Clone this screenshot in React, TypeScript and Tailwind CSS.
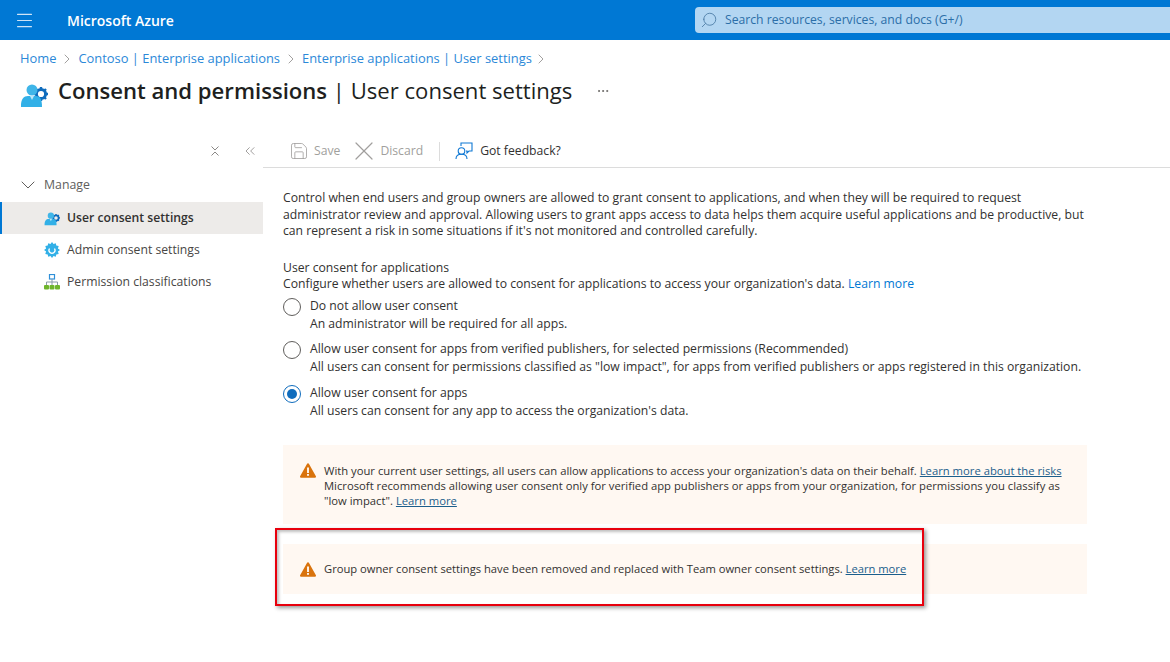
import React from 'react';
import { Menu, Search, ChevronRight, ChevronDown, ChevronsLeft, X, Save, Ellipsis } from 'lucide-react';

const font = "font-['Open_Sans','Noto_Sans',sans-serif]";

const PersonGear = ({ className }: { className?: string }) => (
  <svg viewBox="0 0 28 24" className={className}>
    <circle cx="21" cy="11" r="4.6" fill="none" stroke="#0f6cbd" strokeWidth="3" />
    <path d="M21 4v2.5M21 15.5V18M14 11h2.5M25.500 11H28M16 6l1.800 1.800M24.200 14.200L26 16M16 16l1.800-1.800M24.200 7.800L26 6" stroke="#0f6cbd" strokeWidth="2.400" />
    <circle cx="12" cy="7" r="5.500" fill="#3fb5e8" />
    <path d="M1 24c-.5-8 3-11 7-11h8c4 0 6 3 6 11z" fill="#32b0e7" />
    <path d="M10 13h4l-2 4z" fill="#bfe6f7" />
  </svg>
);

const AdminGear = () => (
  <svg viewBox="0 0 16 16" className="w-4 h-4">
    <path d="M8 0l1.500 2 2.300-.8.500 2.400 2.400.5-.8 2.300L16 8l-2.100 1.600.8 2.300-2.400.5-.5 2.400-2.300-.8L8 16l-1.500-2-2.300.8-.5-2.400-2.400-.5.8-2.300L0 8l2.100-1.600-.8-2.300 2.400-.5.5-2.400 2.300.8z" fill="#32b0e7" />
    <path d="M5.500 6.500a3 3 0 1 0 5 0" fill="none" stroke="#fff" strokeWidth="1.300" />
  </svg>
);

const Hierarchy = () => (
  <svg viewBox="0 0 16 16" className="w-4 h-4">
    <rect x="5.500" y="0.500" width="5" height="4.500" fill="#fff" stroke="#2f8fd8" strokeWidth="1.200" />
    <path d="M8 5v3M2.500 11V8h11v3M8 8v3" fill="none" stroke="#8a9aa8" strokeWidth="1" />
    <rect x="0" y="11" width="5" height="4.500" rx="1" fill="#6fb52c" />
    <rect x="5.500" y="11" width="5" height="4.500" rx="1" fill="#6fb52c" />
    <rect x="11" y="11" width="5" height="4.500" rx="1" fill="#6fb52c" />
  </svg>
);

const Feedback = () => (
  <svg viewBox="0 0 18 18" className="w-[18px] h-[18px]" fill="none" stroke="#0f78d4" strokeWidth="1.100">
    <path d="M6 4V1h11v8h-3l-2 2v-2h-1" />
    <circle cx="6.500" cy="9" r="3.300" />
    <path d="M1 17c0-3 2.300-4.700 5.500-4.700S12 14 12 17" />
  </svg>
);

const CollapseAll = () => (
  <svg viewBox="0 0 12 12" className="w-3 h-3" fill="none" stroke="#8a8886" strokeWidth="1">
    <path d="M2.500 1.500L6 5l3.500-3.500M2.500 10.500L6 7l3.500 3.500" />
  </svg>
);

const WarningIcon = () => (
  <svg viewBox="0 0 16 15" className="w-4 h-[15px] shrink-0">
    <path d="M8 0.300a1 1 0 0 1 .9.500l7 12.500a1 1 0 0 1-.9 1.500H1a1 1 0 0 1-.9-1.500l7-12.500A1 1 0 0 1 8 .3z" fill="#d9730d" />
    <rect x="7.100" y="4.500" width="1.800" height="5.500" fill="#fff" />
    <rect x="7.100" y="11" width="1.800" height="1.800" fill="#fff" />
  </svg>
);

const Radio = ({ checked }: { checked?: boolean }) =>
  checked ? (
    <span className="w-[18px] h-[18px] rounded-full border border-[#0f6cbd] flex items-center justify-center">
      <span className="w-2.5 h-2.5 rounded-full bg-[#0f6cbd]" />
    </span>
  ) : (
    <span className="block w-[18px] h-[18px] rounded-full border border-[#605e5c]" />
  );

const RadioRow = ({ label, hint, checked }: { label: string; hint: string; checked?: boolean }) => (
  <div className="flex gap-[9px] h-[43.500px]">
    <div className="pt-[1px] shrink-0">
      <Radio checked={checked} />
    </div>
    <div className="leading-[18px]">
      <div>{label}</div>
      <div>{hint}</div>
    </div>
  </div>
);

const navItems = [
  { label: 'User consent settings', icon: <PersonGear className="w-4 h-[15px]" />, active: true },
  { label: 'Admin consent settings', icon: <AdminGear /> },
  { label: 'Permission classifications', icon: <Hierarchy /> },
];

export default function App() {
  return (
    <div className={`${font} w-[1170px] h-[662px] overflow-hidden bg-white text-[#323130] relative`}>
      {/* Top bar */}
      <header className="h-10 bg-[#0078d4] flex items-center text-white">
        <Menu className="w-[21px] h-[21px] ml-[14px] text-[#cfe4f6]" strokeWidth={1.2} />
        <span className="ml-[32px] text-[14px] font-semibold w-[628px] shrink-0">Microsoft Azure</span>
        <div className="flex-1 h-[26px] bg-[#b3d6f2] rounded-l-sm flex items-center pl-[5px] gap-[7px] text-[#2b6ea8] text-[12.200px]">
          <Search className="w-[18px] h-[18px] -scale-x-100 text-[#4f7fa8]" strokeWidth={1.2} />
          <span className="pt-px">Search resources, services, and docs (G+/)</span>
        </div>
      </header>

      {/* Breadcrumb */}
      <nav className="flex items-center h-[36px] pt-[2px] pl-5 text-[12.900px] text-[#2b88d8]">
        <span>Home</span>
        <ChevronRight className="w-4 h-4 mx-[3px] text-[#8a8886]" strokeWidth={1.2} />
        <span>Contoso | Enterprise applications</span>
        <ChevronRight className="w-4 h-4 mx-[3px] text-[#8a8886]" strokeWidth={1.2} />
        <span>Enterprise applications | User settings</span>
        <ChevronRight className="w-4 h-4 mx-[1px] text-[#8a8886]" strokeWidth={1.2} />
      </nav>

      {/* Title */}
      <div className="flex items-center h-[30px] pl-5">
        <PersonGear className="w-7 h-6 mt-2" />
        <h1 className="ml-[10px] text-[22.100px] text-[#201f1e]">
          <span className="font-semibold">Consent and permissions</span> | User consent settings
        </h1>
        <Ellipsis className="w-[14px] h-[14px] ml-6 text-[#605e5c]" strokeWidth={1.5} />
      </div>

      <div className="flex mt-[27px]">
        {/* Sidebar */}
        <aside className="w-[263px] shrink-0">
          <div className="flex justify-end items-center h-[35px] pr-[5px] gap-[21px] text-[#8a8886]">
            <CollapseAll />
            <ChevronsLeft className="w-4 h-4" strokeWidth={1.2} />
          </div>
          <div className="flex items-center h-[34px] pl-[16px] gap-1 text-[12.300px] text-[#605e5c]">
            <ChevronDown className="w-6 h-6" strokeWidth={1} />
            <span>Manage</span>
          </div>
          <ul className="text-[12.200px]">
            {navItems.map((item) => (
              <li
                key={item.label}
                className={`flex items-center h-8 gap-[7px] ${
                  item.active ? 'bg-[#edebe9] border-l-2 border-[#0078d4] pl-[42px] font-semibold' : 'pl-[44px] text-[#484644]'
                }`}
              >
                {item.icon}
                <span>{item.label}</span>
              </li>
            ))}
          </ul>
        </aside>

        {/* Main */}
        <main className="flex-1 min-w-0 text-[12.200px]">
          <div className="flex items-center h-[35px] pt-[2px] border-b border-[#dcdcdc] pl-[26px] text-[#a19f9d]">
            <Save className="w-5 h-5" strokeWidth={1} />
            <span className="ml-[5px]">Save</span>
            <X className="w-8 h-8 ml-2" strokeWidth={0.9} />
            <span>Discard</span>
            <span className="w-px h-[19px] bg-[#dcdcdc] ml-4 mr-[15px]" />
            <Feedback />
            <span className="ml-[7px] text-[#323130]">Got feedback?</span>
          </div>

          <div className="pl-[20px] w-[824px] pt-[22px]">
            <p className="leading-[16.500px] w-[812px]">
              Control when end users and group owners are allowed to grant consent to applications, and when they will be required to request administrator review and approval. Allowing users to grant apps access to data helps them acquire useful applications and be productive, but can represent a risk in some situations if it's not monitored and controlled carefully.
            </p>

            <div className="mt-[20px] leading-[16.500px]">User consent for applications</div>
            <div className="leading-[16.500px]">
              Configure whether users are allowed to consent for applications to access your organization's data.{' '}
              <span className="text-[#0078d4]">Learn more</span>
            </div>

            <div className="mt-[4px]">
              <RadioRow label="Do not allow user consent" hint="An administrator will be required for all apps." />
              <RadioRow
                label="Allow user consent for apps from verified publishers, for selected permissions (Recommended)"
                hint={'All users can consent for permissions classified as "low impact", for apps from verified publishers or apps registered in this organization.'}
              />
              <RadioRow checked label="Allow user consent for apps" hint="All users can consent for any app to access the organization's data." />
            </div>

            {/* Banners */}
            <div className="mt-[18px] h-[79px] bg-[#fff8f2] flex pl-[17px] pr-[20px] pt-[18px] gap-2 text-[11.250px] leading-[15px]">
              <WarningIcon />
              <p>
                With your current user settings, all users can allow applications to access your organization's data on their behalf.{' '}
                <span className="underline text-[#1b5e8c]">Learn more about the risks</span>
                <br />
                Microsoft recommends allowing user consent only for verified app publishers or apps from your organization, for permissions you classify as "low impact".{' '}
                <span className="underline text-[#1b5e8c]">Learn more</span>
              </p>
            </div>
            <div className="mt-[20px] h-[50px] bg-[#fff8f2] flex items-center pl-[17px] gap-2 text-[11.200px]">
              <WarningIcon />
              <p>
                Group owner consent settings have been removed and replaced with Team owner consent settings.{' '}
                <span className="underline text-[#1b5e8c]">Learn more</span>
              </p>
            </div>
          </div>
        </main>
      </div>

      {/* Red highlight drawn on top of the screenshot */}
      <div className="absolute left-[275px] top-[528px] w-[649px] h-[78px] border-2 border-[#e8000d] shadow-[2px_2px_4px_rgba(0,0,0,0.4),inset_2px_2px_3px_rgba(0,0,0,0.25)]" />
    </div>
  );
}
